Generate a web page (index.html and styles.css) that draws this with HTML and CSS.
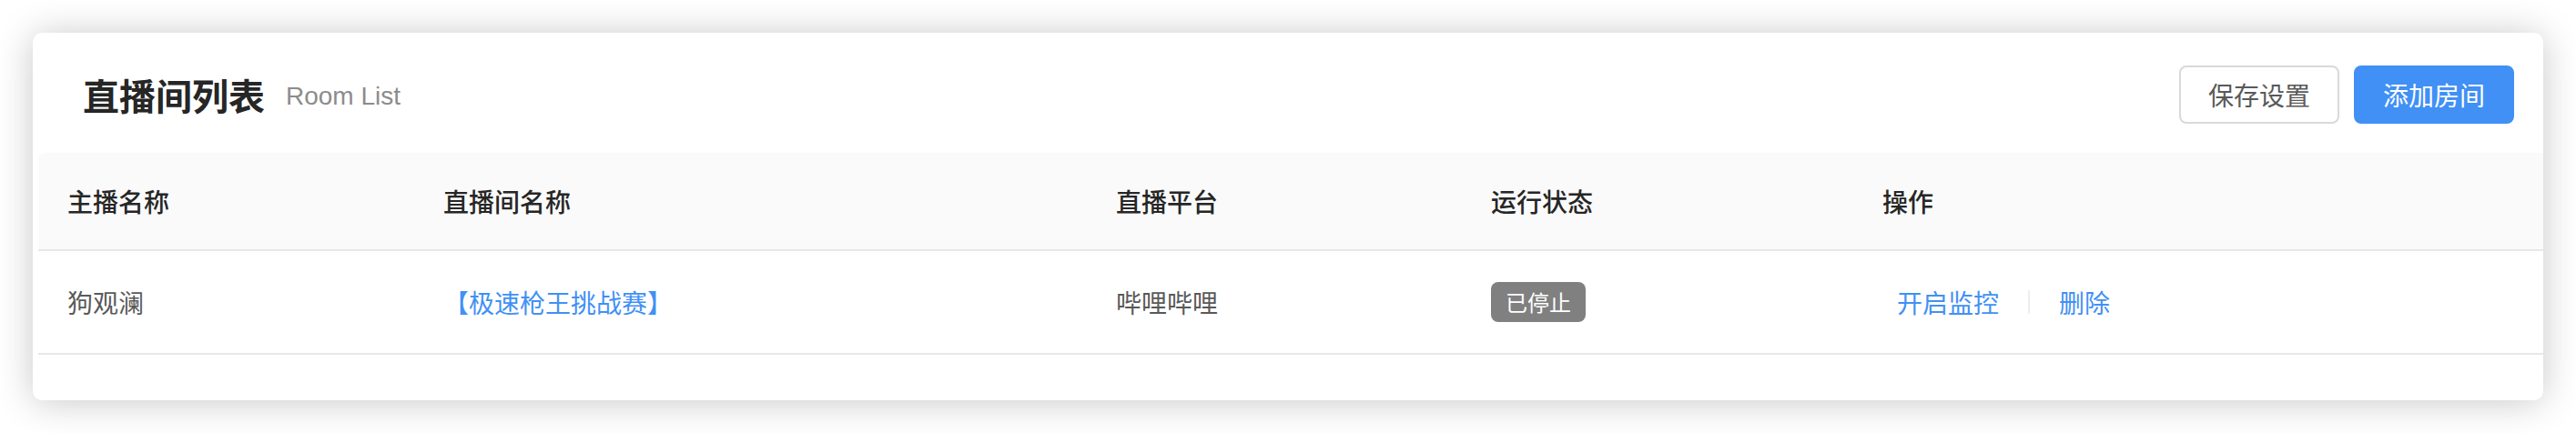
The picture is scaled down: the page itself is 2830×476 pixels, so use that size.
FILE: index.html
```html
<!DOCTYPE html>
<html lang="zh-CN">
<head>
<meta charset="utf-8">
<title>直播间列表</title>
<link rel="stylesheet" href="styles.css">
</head>
<body>
<div class="card">
  <div class="card-head">
    <div class="title-group">
      <h1 class="title">直播间列表</h1>
      <span class="subtitle">Room List</span>
    </div>
    <div class="actions">
      <button class="btn btn-default">保存设置</button>
      <button class="btn btn-primary">添加房间</button>
    </div>
  </div>
  <div class="table">
    <div class="row row-head">
      <div class="cell">主播名称</div>
      <div class="cell">直播间名称</div>
      <div class="cell">直播平台</div>
      <div class="cell">运行状态</div>
      <div class="cell">操作</div>
    </div>
    <div class="row row-body">
      <div class="cell">狗观澜</div>
      <div class="cell"><a class="link">【极速枪王挑战赛】</a></div>
      <div class="cell">哔哩哔哩</div>
      <div class="cell"><span class="tag">已停止</span></div>
      <div class="cell">
        <a class="link op">开启监控</a>
        <span class="divider"></span>
        <a class="link op">删除</a>
      </div>
    </div>
  </div>
</div>
</body>
</html>
```

FILE: styles.css
```css
* {
  box-sizing: border-box;
}

html, body {
  margin: 0;
  padding: 0;
  background: #ffffff;
}

body {
  font-family: "Liberation Sans", "Noto Sans CJK SC", sans-serif;
  color: #595959;
}

.card {
  margin: 36px;
  width: 2758px;
  height: 404px;
  background: #ffffff;
  border-radius: 10px;
  box-shadow: 0 2px 40px rgba(0, 0, 0, 0.22);
  overflow: hidden;
}

.card-head {
  display: flex;
  align-items: center;
  justify-content: space-between;
  padding: 36px 32px 32px 55px;
  height: 132px;
}

.title-group {
  display: flex;
  align-items: center;
}

.title {
  margin: 0;
  font-family: "Noto Sans CJK SC", sans-serif;
  font-size: 40px;
  font-weight: 700;
  color: #262626;
  line-height: 56px;
}

.subtitle {
  margin-left: 23px;
  margin-top: 4px;
  font-size: 28px;
  color: #8c8c8c;
}

.actions {
  display: flex;
  gap: 16px;
}

.btn {
  height: 64px;
  padding: 0 30px;
  border-radius: 8px;
  font-family: "Noto Sans CJK SC", sans-serif;
  font-size: 28px;
  line-height: 1;
  cursor: pointer;
}

.btn-default {
  background: #ffffff;
  border: 2px solid #d9d9d9;
  color: #595959;
}

.btn-primary {
  background: #4190f5;
  border: 2px solid #4190f5;
  color: #ffffff;
}

.table {
  margin-left: 6px;
  font-family: "Noto Sans CJK SC", sans-serif;
  font-size: 28px;
}

.row {
  display: grid;
  grid-template-columns: 413px 739px 412px 430px 1fr;
  align-items: center;
  border-bottom: 2px solid #e8e8e8;
}

.row-head {
  height: 108px;
  background: #fafafa;
  border-top-left-radius: 8px;
  color: #262626;
  font-weight: 500;
}

.row-body {
  height: 114px;
  color: #595959;
}

.cell {
  padding-left: 32px;
  display: flex;
  align-items: center;
}

.link {
  color: #4190f5;
  text-decoration: none;
  cursor: pointer;
}

.tag {
  display: inline-block;
  height: 44px;
  line-height: 44px;
  padding: 0 16px;
  border-radius: 8px;
  background: #808080;
  color: #ffffff;
  font-size: 24px;
}

.op {
  padding: 0 16px;
}

.divider {
  display: inline-block;
  width: 2px;
  height: 26px;
  margin: 0 16px;
  background: #eeeeee;
}
```
